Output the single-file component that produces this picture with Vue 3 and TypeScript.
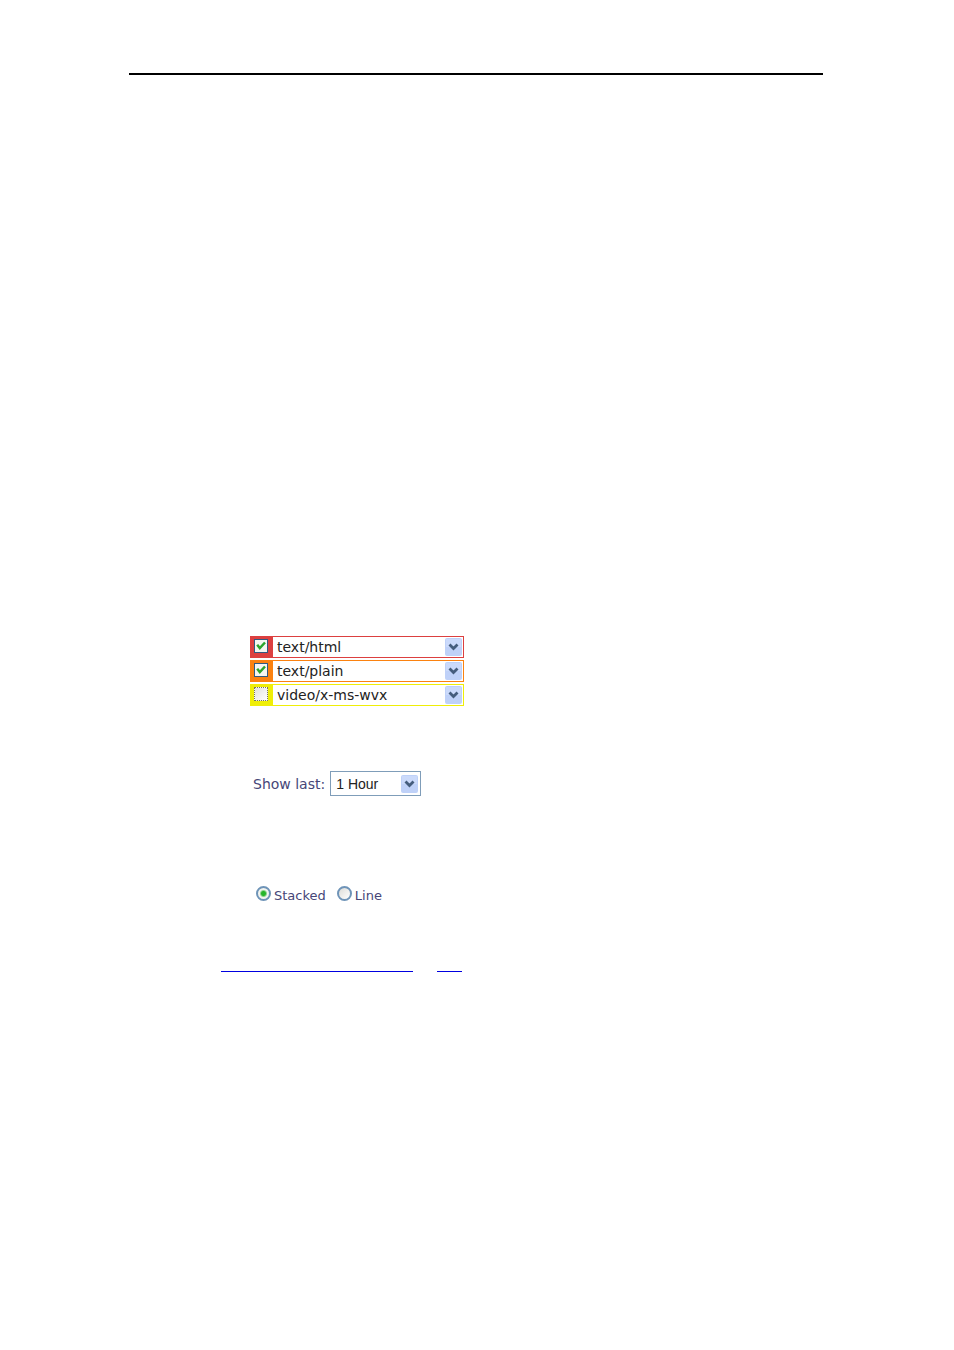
<script setup lang="ts">
import { ref } from 'vue'

interface TypeFilter {
  id: string
  value: string
  tone: string
  enabled: boolean
}

const filters = ref<TypeFilter[]>([
  { id: 'html', value: 'text/html', tone: 'red', enabled: true },
  { id: 'plain', value: 'text/plain', tone: 'orange', enabled: true },
  { id: 'video', value: 'video/x-ms-wvx', tone: 'yellow', enabled: false },
])
const types: string[] = ['text/html', 'text/plain', 'video/x-ms-wvx']
const period = ref<string>('1 Hour')
const mode = ref<string>('Stacked')
</script>

<template>
  <main class="page">
    <hr class="rule" />

    <section class="filters">
      <div v-for="f in filters" :key="f.id" class="filter" :class="f.tone">
        <span class="tick">
          <input v-model="f.enabled" type="checkbox" :aria-label="f.value" />
          <svg v-if="f.enabled" viewBox="0 0 14 14" aria-hidden="true">
            <path d="M3.2 5.8 5.8 9 11 3.5" fill="none" stroke="#2ca52c" stroke-width="2.5" />
          </svg>
        </span>
        <span class="drop">
          <select v-model="f.value" aria-label="Content type">
            <option v-for="t in types" :key="t">{{ t }}</option>
          </select>
          <svg class="arrow" viewBox="0 0 17 18" aria-hidden="true">
            <rect width="17" height="18" rx="2" fill="#bfd1f8" />
            <path d="M1 1h15v8H1z" fill="#cbdafb" />
            <path d="M4.5 6.5 8.5 10.5 12.5 6.5" fill="none" stroke="#455d7d" stroke-width="2.8" />
          </svg>
        </span>
      </div>
    </section>

    <section class="period">
      <label for="period">Show last:</label>
      <span class="drop boxed">
        <select id="period" v-model="period">
          <option>1 Hour</option>
        </select>
        <svg class="arrow" viewBox="0 0 17 18" aria-hidden="true">
          <rect width="17" height="18" rx="2" fill="#bfd1f8" />
          <path d="M1 1h15v8H1z" fill="#cbdafb" />
          <path d="M4.5 6.5 8.5 10.5 12.5 6.5" fill="none" stroke="#455d7d" stroke-width="2.8" />
        </svg>
      </span>
    </section>

    <section class="modes">
      <label v-for="m in ['Stacked', 'Line']" :key="m">
        <input v-model="mode" type="radio" name="mode" :value="m" />
        <span>{{ m }}</span>
      </label>
    </section>

    <nav class="links">
      <a href="#types" class="long" aria-label="Content types"></a>
      <a href="#top" class="short" aria-label="Top"></a>
    </nav>
  </main>
</template>

<style>
body {
  margin: 0;
  background: #fff;
}
</style>

<style scoped>
.page {
  padding: 73px 131px 0 129px;
  font: 14px/20px "DejaVu Sans", Verdana, sans-serif;
  color: #464678;
}
.rule {
  height: 2px;
  margin: 0;
  border: 0;
  background: #000;
}
.filters {
  display: flex;
  flex-direction: column;
  gap: 2px;
  max-width: 214px;
  margin: 561px 0 0 121px;
}
.filter {
  display: flex;
  height: 20px;
  border: 1px solid var(--tone);
}
.red { --tone: #dc4040; }
.orange { --tone: #fb8210; }
.yellow { --tone: #efee08; }
.tick {
  display: grid;
  flex: none;
  width: 22px;
  place-content: center;
  padding: 0 2px 2px 0;
  box-sizing: border-box;
  background: var(--tone);
}
.tick > * {
  grid-area: 1 / 1;
}
.tick input {
  appearance: none;
  width: 14px;
  height: 14px;
  margin: 0;
  border: 1px solid #315a82;
  background: #f6f6f2;
}
.yellow .tick input {
  border: 1px dotted #77775a;
  background: linear-gradient(135deg, #e2e2df, #fff);
}
.tick svg {
  width: 14px;
  height: 14px;
  pointer-events: none;
}
.drop {
  display: grid;
  flex: 1;
  align-items: center;
}
.drop > * {
  grid-area: 1 / 1;
}
select {
  appearance: none;
  width: 100%;
  height: 20px;
  margin: 0;
  padding: 0 20px 0 4px;
  border: 0;
  border-radius: 0;
  background: #fff;
  color: #222;
  font: inherit;
}
.arrow {
  justify-self: end;
  width: 17px;
  height: 18px;
  margin-right: 1px;
  pointer-events: none;
}
.period {
  display: flex;
  align-items: center;
  gap: 5px;
  margin: 65px 0 0 124px;
}
.boxed {
  flex: none;
  width: 89px;
  height: 23px;
  border: 1px solid #7f9db9;
}
.boxed select {
  padding-left: 5px;
  font: 14px/20px "Liberation Sans", Arial, sans-serif;
}
.boxed .arrow {
  margin-right: 2px;
}
.modes {
  display: flex;
  gap: 11px;
  margin: 90px 0 0 127px;
  font-size: 13px;
}
.modes label {
  display: flex;
  gap: 3px;
}
.modes input {
  appearance: none;
  width: 15px;
  height: 15px;
  margin: 0;
  border: 2px solid #6f94b8;
  border-radius: 50%;
  background: linear-gradient(135deg, #dcdcd8, #fff);
}
.modes input:checked {
  background: radial-gradient(circle, #27b52a 0 2px, #f2f4ef 4px);
}
.links {
  display: flex;
  gap: 24px;
  margin: 65px 0 0 92px;
}
.links a {
  border-bottom: 1px solid #0000e0;
}
.long {
  width: 192px;
}
.short {
  width: 25px;
}
</style>
